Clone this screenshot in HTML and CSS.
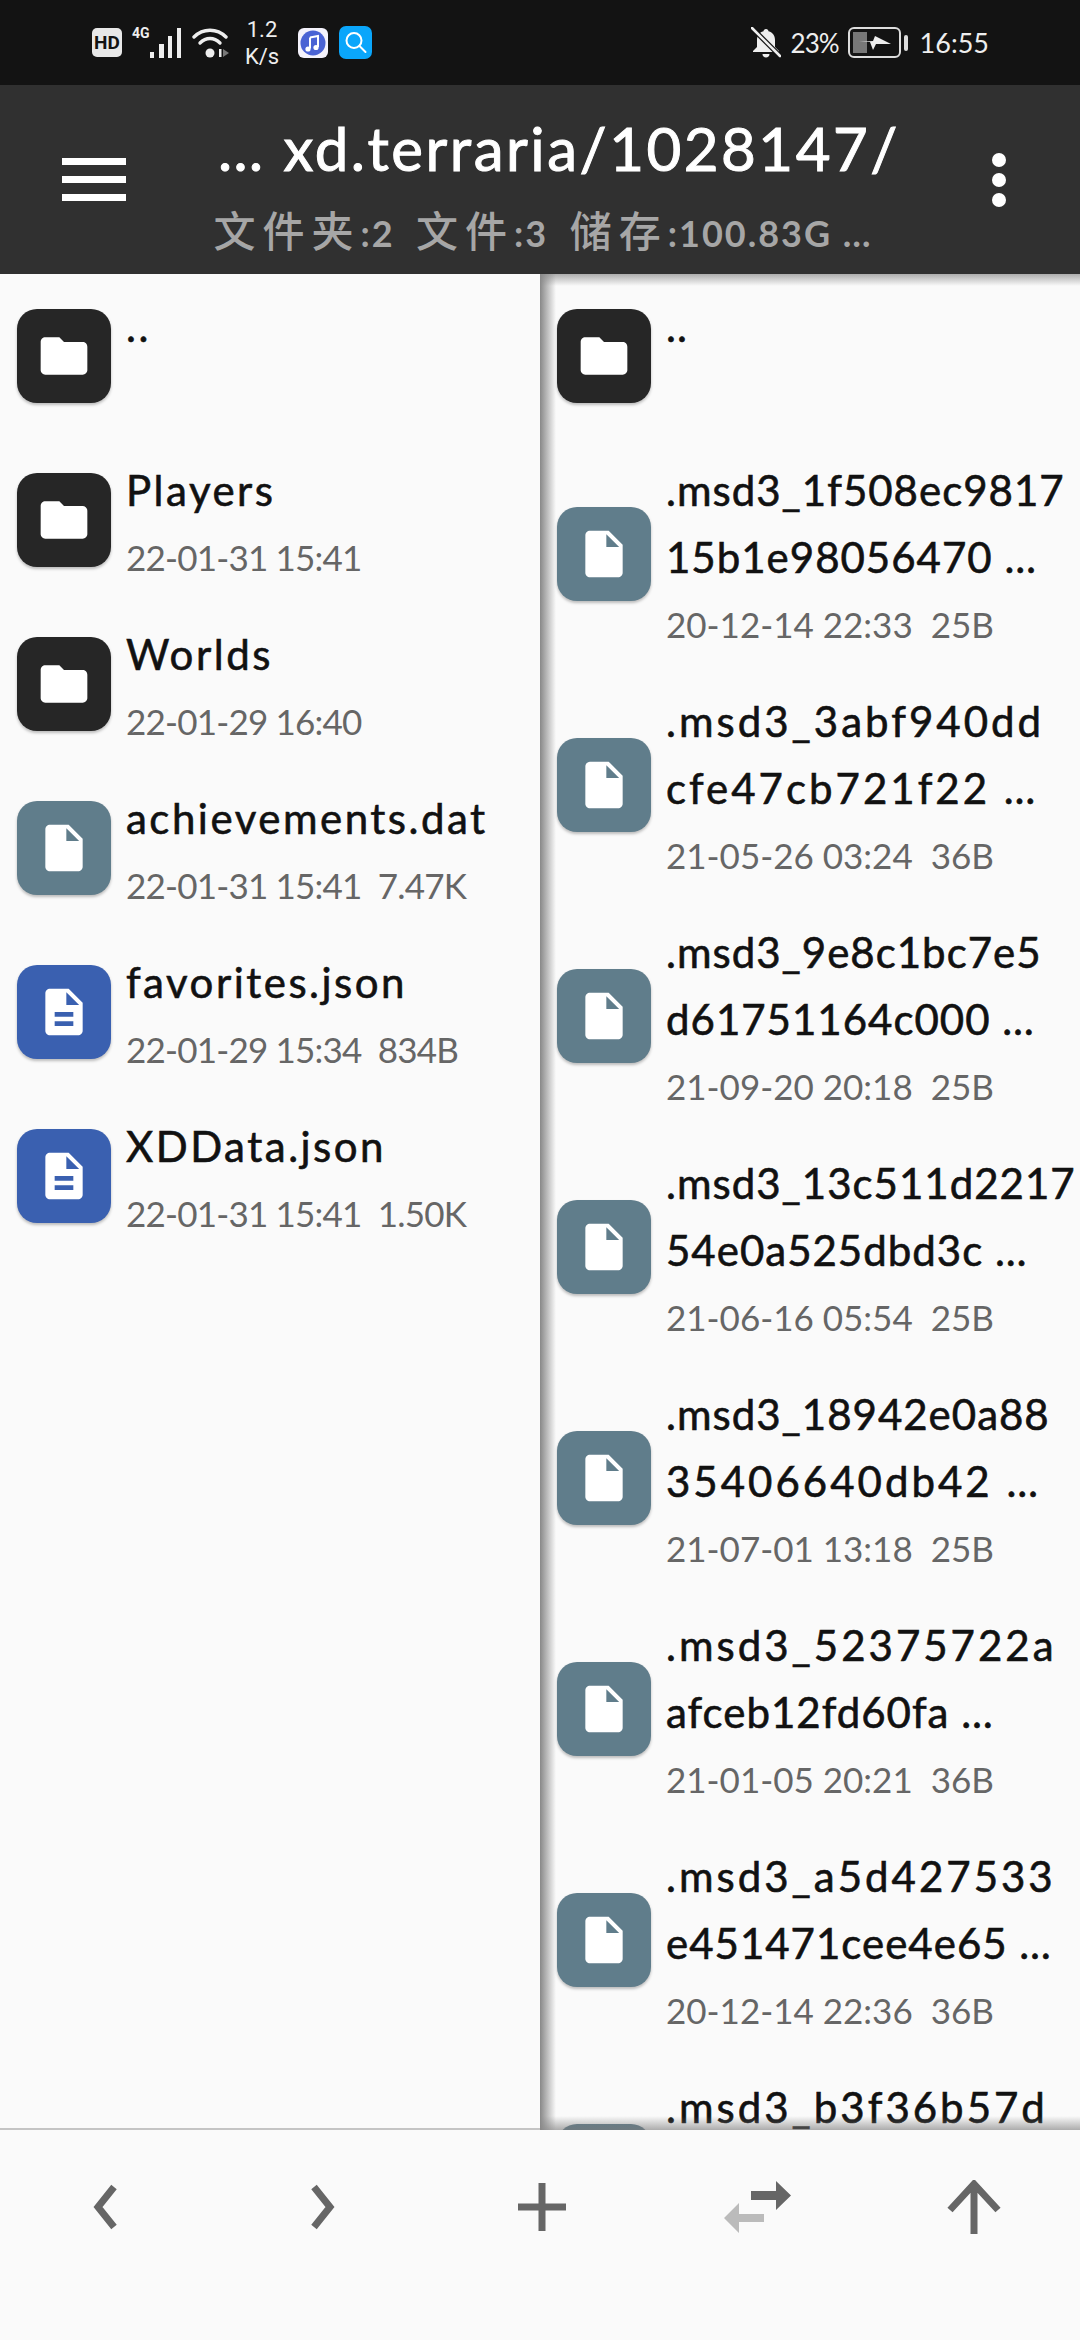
FILE: index.html
```html
<!DOCTYPE html>
<html lang="zh">
<head>
  <meta charset="UTF-8" />
  <title>xd.terraria/1028147/</title>
  <link rel="stylesheet" href="styles.css">
</head>
<body>
  <svg class="defs" width="0" height="0">
    <symbol id="i-folder" viewBox="0 0 24 24"><path d="M10 4H4c-1.1 0-1.99.9-1.99 2L2 18c0 1.1.9 2 2 2h16c1.1 0 2-.9 2-2V8c0-1.1-.9-2-2-2h-8l-2-2z"/></symbol>
    <symbol id="i-file" viewBox="0 0 24 24"><path d="M6 2c-1.1 0-1.99.9-1.99 2L4 20c0 1.1.89 2 1.99 2H18c1.1 0 2-.9 2-2V8l-6-6H6zm7 7V3.5L18.5 9H13z"/></symbol>
    <symbol id="i-doc" viewBox="0 0 24 24"><path d="M14 2H6c-1.1 0-1.99.9-1.99 2L4 20c0 1.1.89 2 1.99 2H18c1.1 0 2-.9 2-2V8l-6-6zm2 16H8v-2h8v2zm0-4H8v-2h8v2zm-3-5V3.5L18.5 9H13z"/></symbol>
  </svg>

  <div class="status-bar">
    <div class="status-left">
      <span class="hd">HD</span>
      <span class="signal">
        <span class="net">4G</span>
        <svg width="32" height="30" viewBox="0 0 32 30"><path d="M0 24h4v6H0zM9 16h5v14H9zM18 8h4v22h-4zM27 0h4v30h-4z" fill="#eee"/></svg>
      </span>
      <svg class="wifi" width="37" height="30" viewBox="0 0 37 30"><g fill="none" stroke="#eee" stroke-width="3.4" stroke-linecap="round"><path d="M2 9C11 0 25 0 34 9"/><path d="M8 15c6-6 14-6 20 0"/></g><circle cx="18" cy="25" r="4.5" fill="#eee"/><path d="M27 21v8h2.500v-8z" fill="#eee"/><path d="M31 21l6 4-6 4z" fill="#777"/></svg>
      <span class="speed">1.2<br>K/s</span>
      <svg class="app-icon" width="30" height="30" viewBox="0 0 30 30"><rect width="30" height="30" rx="6" fill="#f4f2fb"/><circle cx="15" cy="15" r="12.500" fill="#4a63d4"/><path d="M12 9.500l8-1.500v11" fill="none" stroke="#fff" stroke-width="2"/><path d="M12 9.500v11" stroke="#fff" stroke-width="2"/><circle cx="10" cy="21" r="2.600" fill="#fff"/><circle cx="18" cy="19.500" r="2.600" fill="#fff"/></svg>
      <svg class="app-icon" width="33" height="33" viewBox="0 0 33 33"><rect width="33" height="33" rx="7" fill="#0aa6fb"/><circle cx="15" cy="14.500" r="7.500" fill="none" stroke="#fff" stroke-width="2"/><path d="M20.500 20l6 6" stroke="#fff" stroke-width="2" stroke-linecap="round"/></svg>
    </div>
    <div class="status-right">
      <svg width="30" height="31" viewBox="0 0 30 31"><path d="M15 2c-1.500 0-2.500 1-2.500 2.300C8 5.500 6 9 6 13v7l-4 4v1h26v-1l-4-4v-7c0-4-2-7.500-6.500-8.700C17.500 3 16.500 2 15 2z" fill="#eee"/><path d="M11.500 27h7c0 2-1.500 3.500-3.500 3.500s-3.500-1.500-3.500-3.500z" fill="#eee"/><path d="M1 1l28 28" stroke="#131313" stroke-width="5"/><path d="M1 1l28 28" stroke="#eee" stroke-width="2.600" stroke-linecap="round"/></svg>
      <span class="battery-pct">23%</span>
      <span class="battery">
        <span class="battery-fill"></span>
        <svg class="bolt" width="32" height="16" viewBox="0 0 32 16"><path d="M0 7l14-1 2-5 16 8-15 0-3 6-3-8z" fill="#eee"/></svg>
      </span>
      <span class="battery-nub"></span>
      <span class="clock">16:55</span>
    </div>
  </div>

  <header class="toolbar">
    <div class="menu-btn"><span></span><span></span><span></span></div>
    <div class="path-info">
      <div class="path-title">… xd.terraria/1028147/</div>
      <div class="path-sub"><span class="cjk">文件夹</span>:2&nbsp; <span class="cjk">文件</span>:3&nbsp; <span class="cjk">储存</span>:100.83G …</div>
    </div>
    <div class="more-btn"><span></span><span></span><span></span></div>
  </header>

  <main class="panes">
    <section class="pane pane-left">
      <div class="row">
        <div class="icon dark"><svg class="glyph"><use href="#i-folder"/></svg></div>
        <div class="info"><div class="name">..</div></div>
      </div>
      <div class="row">
        <div class="icon dark"><svg class="glyph"><use href="#i-folder"/></svg></div>
        <div class="info"><div class="name">Players</div><div class="meta">22-01-31 15:41</div></div>
      </div>
      <div class="row">
        <div class="icon dark"><svg class="glyph"><use href="#i-folder"/></svg></div>
        <div class="info"><div class="name">Worlds</div><div class="meta">22-01-29 16:40</div></div>
      </div>
      <div class="row">
        <div class="icon slate"><svg class="glyph"><use href="#i-file"/></svg></div>
        <div class="info"><div class="name">achievements.dat</div><div class="meta">22-01-31 15:41&nbsp; 7.47K</div></div>
      </div>
      <div class="row">
        <div class="icon blue"><svg class="glyph"><use href="#i-doc"/></svg></div>
        <div class="info"><div class="name">favorites.json</div><div class="meta">22-01-29 15:34&nbsp; 834B</div></div>
      </div>
      <div class="row">
        <div class="icon blue"><svg class="glyph"><use href="#i-doc"/></svg></div>
        <div class="info"><div class="name">XDData.json</div><div class="meta">22-01-31 15:41&nbsp; 1.50K</div></div>
      </div>
    </section>

    <section class="pane pane-right">
      <div class="row">
        <div class="icon dark"><svg class="glyph"><use href="#i-folder"/></svg></div>
        <div class="info"><div class="name">..</div></div>
      </div>
      <div class="row">
        <div class="icon slate"><svg class="glyph"><use href="#i-file"/></svg></div>
        <div class="info"><div class="name">.msd3_1f508ec9817</div><div class="name">15b1e98056470 …</div><div class="meta">20-12-14 22:33&nbsp; 25B</div></div>
      </div>
      <div class="row">
        <div class="icon slate"><svg class="glyph"><use href="#i-file"/></svg></div>
        <div class="info"><div class="name wide">.msd3_3abf940dd</div><div class="name wide">cfe47cb721f22 …</div><div class="meta">21-05-26 03:24&nbsp; 36B</div></div>
      </div>
      <div class="row">
        <div class="icon slate"><svg class="glyph"><use href="#i-file"/></svg></div>
        <div class="info"><div class="name">.msd3_9e8c1bc7e5</div><div class="name">d61751164c000 …</div><div class="meta">21-09-20 20:18&nbsp; 25B</div></div>
      </div>
      <div class="row">
        <div class="icon slate"><svg class="glyph"><use href="#i-file"/></svg></div>
        <div class="info"><div class="name">.msd3_13c511d2217</div><div class="name">54e0a525dbd3c …</div><div class="meta">21-06-16 05:54&nbsp; 25B</div></div>
      </div>
      <div class="row">
        <div class="icon slate"><svg class="glyph"><use href="#i-file"/></svg></div>
        <div class="info"><div class="name">.msd3_18942e0a88</div><div class="name wide">35406640db42 …</div><div class="meta">21-07-01 13:18&nbsp; 25B</div></div>
      </div>
      <div class="row">
        <div class="icon slate"><svg class="glyph"><use href="#i-file"/></svg></div>
        <div class="info"><div class="name wide">.msd3_52375722a</div><div class="name">afceb12fd60fa …</div><div class="meta">21-01-05 20:21&nbsp; 36B</div></div>
      </div>
      <div class="row">
        <div class="icon slate"><svg class="glyph"><use href="#i-file"/></svg></div>
        <div class="info"><div class="name wide">.msd3_a5d427533</div><div class="name">e451471cee4e65 …</div><div class="meta">20-12-14 22:36&nbsp; 36B</div></div>
      </div>
      <div class="row row-cut">
        <div class="icon slate"><svg class="glyph"><use href="#i-file"/></svg></div>
        <div class="info"><div class="name wide">.msd3_b3f36b57d</div></div>
      </div>
    </section>
  </main>

  <nav class="bottom-bar">
    <svg width="30" height="46" viewBox="0 0 30 46"><path d="M24 3L8 23l16 20" fill="none" stroke="#666" stroke-width="7"/></svg>
    <svg width="30" height="46" viewBox="0 0 30 46"><path d="M6 3l16 20L6 43" fill="none" stroke="#666" stroke-width="7"/></svg>
    <svg width="48" height="48" viewBox="0 0 48 48"><path d="M0 24h48M24 0v48" fill="none" stroke="#666" stroke-width="7"/></svg>
    <svg width="68" height="52" viewBox="0 0 68 52"><path d="M27 10h25V0l15 14.500L52 29V19H27z" fill="#666"/><path d="M40 33H15V22L0 37l15 15V41h25z" fill="#bbb"/></svg>
    <svg width="54" height="54" viewBox="0 0 54 54"><path d="M27 54V4M3 30L27 4l24 26" fill="none" stroke="#666" stroke-width="7"/></svg>
  </nav>
</body>
</html>
```

FILE: styles.css
```css
* {
  box-sizing: border-box;
}
html, body {
  margin: 0;
  padding: 0;
}
body {
  width: 1080px;
  height: 2340px;
  display: flex;
  flex-direction: column;
  overflow: hidden;
  background: #fafafa;
  font-family: "Lato", "Noto Sans CJK SC", sans-serif;
}
.defs {
  position: absolute;
}

/* status bar */
.status-bar {
  height: 85px;
  background: #131313;
  color: #eee;
  display: flex;
  justify-content: space-between;
  align-items: center;
  padding: 0 91px 0 92px;
}
.status-left, .status-right {
  display: flex;
  align-items: center;
}
.hd {
  width: 30px;
  height: 29px;
  border-radius: 5px;
  background: #e8e8e8;
  color: #131313;
  font: bold 19px "Roboto", sans-serif;
  text-align: center;
  line-height: 29px;
}
.signal {
  position: relative;
  display: flex;
  margin-left: 28px;
}
.net {
  position: absolute;
  left: -18px;
  top: -3px;
  font: bold 14px "Roboto", sans-serif;
}
.wifi {
  margin-left: 10px;
}
.speed {
  width: 50px;
  margin-left: 8px;
  font: 22px/27px "Roboto", sans-serif;
  text-align: center;
}
.app-icon {
  margin-left: 11px;
}
.battery-pct {
  margin-left: 10px;
  font-size: 26px;
  letter-spacing: -1px;
}
.battery {
  position: relative;
  width: 53px;
  height: 31px;
  margin-left: 9px;
  border: 2px solid #ddd;
  border-radius: 6px;
}
.battery-fill {
  position: absolute;
  left: 3px;
  top: 3px;
  bottom: 3px;
  width: 14px;
  background: #777;
}
.bolt {
  position: absolute;
  left: 9px;
  top: 6px;
}
.battery-nub {
  width: 4px;
  height: 16px;
  margin-left: 3px;
  border-radius: 2px;
  background: #ddd;
}
.clock {
  margin-left: 12px;
  font-size: 27px;
}

/* toolbar */
.toolbar {
  height: 189px;
  background: #303030;
  display: flex;
  align-items: center;
}
.menu-btn {
  width: 64px;
  margin-left: 62px;
  display: flex;
  flex-direction: column;
  gap: 11px;
}
.menu-btn span {
  height: 7px;
  background: #fff;
}
.path-info {
  flex: 1;
  padding-top: 12px;
  text-align: center;
  white-space: nowrap;
}
.path-title {
  color: #fff;
  font-size: 60px;
  line-height: 78px;
  letter-spacing: 2.500px;
  -webkit-text-stroke: 1px #fff;
}
.path-sub {
  color: #a6a6a6;
  font-size: 36px;
  line-height: 60px;
  letter-spacing: 2px;
  margin-top: 14px;
  padding-right: 32px;
  font-weight: 700;
}
.path-sub .cjk {
  font-size: 42px;
  letter-spacing: 7px;
  font-weight: 500;
}
.more-btn {
  width: 14px;
  margin-right: 74px;
  display: flex;
  flex-direction: column;
  gap: 6px;
}
.more-btn span {
  height: 14px;
  border-radius: 50%;
  background: #fff;
}

/* file panes */
.panes {
  height: 1856px;
  display: flex;
  overflow: hidden;
}
.pane {
  width: 540px;
  overflow: hidden;
  position: relative;
}
.pane-left {
  border-bottom: 2px solid #c4c4c4;
}
.pane-right::before {
  content: "";
  position: absolute;
  inset: 0;
  z-index: 2;
  background:
    linear-gradient(to right, #888, rgba(160, 160, 160, 0) 16px),
    linear-gradient(to bottom, rgba(120, 120, 120, .6), rgba(160, 160, 160, 0) 12px),
    linear-gradient(to top, rgba(120, 120, 120, .6), rgba(160, 160, 160, 0) 14px);
}
.row {
  min-height: 164px;
  padding: 15px 0;
  display: flex;
  align-items: center;
  white-space: nowrap;
}
.row-cut {
  min-height: 231px;
}
.icon {
  width: 94px;
  height: 94px;
  margin: 0 15px 0 17px;
  flex: none;
  border-radius: 20px;
  display: flex;
  align-items: center;
  justify-content: center;
  box-shadow: 0 2px 3px rgba(0, 0, 0, .25);
}
.icon.dark { background: #262626; }
.icon.slate { background: #607d8b; }
.icon.blue { background: #3a60b0; }
.glyph {
  width: 56px;
  height: 56px;
  fill: #fff;
}
.info {
  align-self: flex-start;
  margin: 4px 0 -4px;
}
.name {
  height: 67px;
  color: #111;
  font-size: 42px;
  line-height: 67px;
  letter-spacing: 1px;
  -webkit-text-stroke: .6px #111;
}
.name.wide {
  letter-spacing: 3px;
}
.pane-left .name {
  letter-spacing: 2.500px;
}
.meta {
  height: 67px;
  color: #666;
  font-size: 35px;
  line-height: 67px;
}
.pane-left .meta {
  letter-spacing: -.8px;
}

/* bottom bar */
.bottom-bar {
  flex: 1;
  background: #fafafa;
  display: flex;
  align-items: center;
  padding-bottom: 56px;
}
.bottom-bar svg {
  flex: none;
}
.bottom-bar svg:nth-child(1) { margin-left: 90px; }
.bottom-bar svg:nth-child(2) { margin-left: 188px; }
.bottom-bar svg:nth-child(3) { margin-left: 180px; }
.bottom-bar svg:nth-child(4) { margin-left: 158px; }
.bottom-bar svg:nth-child(5) { margin-left: 155px; }
```
